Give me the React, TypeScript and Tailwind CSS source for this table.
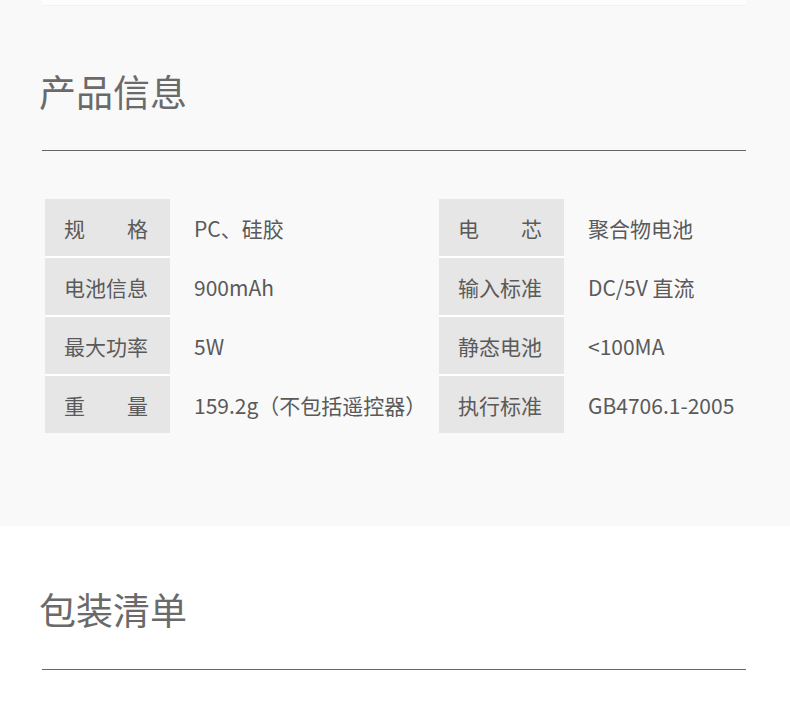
const ROWS = [
    [
        {label: ["规", "格"], value: "PC、硅胶"},
        {label: ["电", "芯"], value: "聚合物电池"},
    ],
    [
        {label: ["电池信息"], value: "900mAh"},
        {label: ["输入标准"], value: "DC/5V 直流"},
    ],
    [
        {label: ["最大功率"], value: "5W"},
        {label: ["静态电池"], value: "<100MA"},
    ],
    [
        {label: ["重", "量"], value: "159.2g（不包括遥控器）"},
        {label: ["执行标准"], value: "GB4706.1-2005"},
    ],
];

function Cell({label, value, first, left}: {label: string[]; value: string; first: boolean; left: boolean}) {
    return (
        <div className={`flex ${left ? "w-[394px] shrink-0" : "flex-1"}`}>
            <div className={`w-[125px] shrink-0 bg-[#e6e6e6] flex items-center pl-[19px] pt-[2px] ${first ? "h-[57px]" : "h-[59px] border-t-2 border-white"}`}>
                <div className="w-[84px] flex justify-between leading-none">
                    {label.map((t, i) => (
                        <span key={i}>{t}</span>
                    ))}
                </div>
            </div>
            <div className={`flex items-center pl-[24px] leading-none whitespace-nowrap ${first ? "pt-[2px]" : "pt-[4px]"}`}>{value}</div>
        </div>
    );
}

export default function App() {
    return (
        <div className="w-[790px] overflow-hidden text-[#5a5a5a]" style={{fontFamily: '"Noto Sans CJK SC", "Noto Sans", sans-serif'}}>
            {/* 产品信息 */}
            <section className="h-[526px] bg-[#f9f9f9] flex flex-col">
                <div className="ml-[42px] w-[704px] h-[6px] bg-[#fdfdfd] border-b border-[#f2f2f2]" />
                <h2 className="ml-[39px] mt-[67px] h-[37px] text-[37px] leading-none font-normal text-[#6a6a6a]">产品信息</h2>
                <div className="ml-[42px] mt-[40px] w-[704px] h-px bg-[#666]" />
                <div className="ml-[45px] mt-[48px] flex flex-col text-[21px]">
                    {ROWS.map((row, idx) => (
                        <div key={idx} className="flex">
                            {row.map((c, j) => (
                                <Cell key={j} label={c.label} value={c.value} first={idx === 0} left={j === 0} />
                            ))}
                        </div>
                    ))}
                </div>
            </section>
            {/* 包装清单 */}
            <section className="h-[190px] bg-white flex flex-col">
                <h2 className="ml-[39px] mt-[65px] h-[37px] text-[37px] leading-none font-normal text-[#6a6a6a]">包装清单</h2>
                <div className="ml-[42px] mt-[41px] w-[704px] h-px bg-[#666]" />
            </section>
        </div>
    );
}
